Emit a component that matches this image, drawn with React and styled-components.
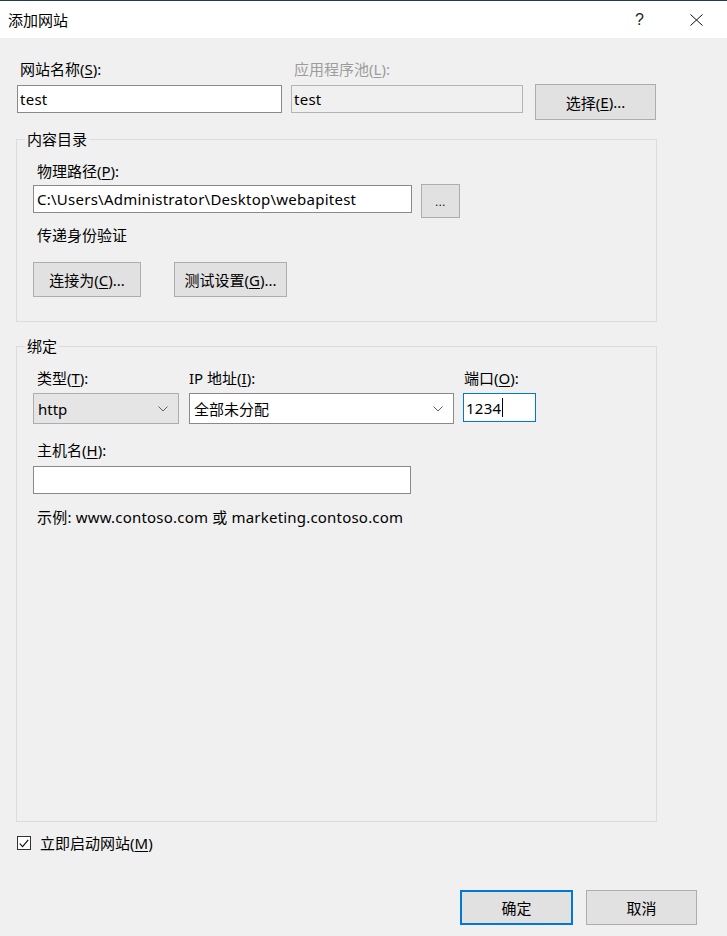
import React from "react";
import styled, { createGlobalStyle } from "styled-components";

const GlobalStyle = createGlobalStyle`
  html, body {
    margin: 0;
    padding: 0;
    background: #f0f0f0;
  }
  body {
    font-family: "Noto Sans", "Noto Sans CJK SC", sans-serif;
    font-size: 15px;
    color: #000;
  }
`;

const Dialog = styled.div`
  width: 727px;
  height: 936px;
  display: flex;
  flex-direction: column;
  background: #f0f0f0;
  overflow: hidden;
`;

const TitleBar = styled.div`
  height: 37px;
  border-top: 1px solid #1e3d52;
  background: #fff;
  display: flex;
  align-items: center;
  padding: 0 2px 0 8px;
  flex-shrink: 0;
`;

const Title = styled.div`
  flex: 1;
  font-size: 15px;
  line-height: 18px;
`;

const TitleButton = styled.div`
  width: 57px;
  height: 37px;
  display: flex;
  align-items: center;
  justify-content: center;
  font-family: "Liberation Sans", sans-serif;
  font-size: 16px;
  color: #222;
`;

const Body = styled.div`
  flex: 1;
  display: flex;
  flex-direction: column;
  padding: 0 16px 0 16px;
`;

const TopRow = styled.div`
  display: flex;
  margin-top: 22px;
  padding-left: 1px;
`;

const Field = styled.div`
  display: flex;
  flex-direction: column;
  width: ${(p) => p.width}px;
  margin-right: ${(p) => p.gap || 0}px;
`;

const Label = styled.div`
  line-height: 18px;
  height: 18px;
  padding-left: ${(p) => (p.indent === undefined ? 4 : p.indent)}px;
  margin-top: ${(p) => p.above || 0}px;
  margin-bottom: ${(p) => p.below || 0}px;
  color: ${(p) => (p.disabled ? "#9c9c9c" : "#000")};
  white-space: nowrap;
`;

const Key = styled.u`
  text-underline-offset: 2px;
`;

const TextBox = styled.div`
  box-sizing: border-box;
  width: ${(p) => (p.width ? `${p.width}px` : "100%")};
  height: ${(p) => p.height || 28}px;
  border: 1px solid ${(p) => (p.focused ? "#0078d7" : p.disabled ? "#b4b4b4" : "#8a8a8a")};
  background: ${(p) => (p.disabled ? "#f0f0f0" : "#fff")};
  padding: 0 ${(p) => p.pad || 3}px;
  display: flex;
  align-items: center;
  white-space: nowrap;
  overflow: hidden;
  letter-spacing: 0.25px;
`;

const Caret = styled.span`
  display: inline-block;
  width: 1px;
  height: 19px;
  background: #000;
  margin-left: 1px;
`;

const Button = styled.div`
  box-sizing: border-box;
  width: ${(p) => p.width}px;
  height: ${(p) => p.height || 35}px;
  background: #e1e1e1;
  border: ${(p) => (p.primary ? "2px solid #0078d7" : "1px solid #adadad")};
  display: flex;
  align-items: center;
  justify-content: center;
  flex-shrink: 0;
  white-space: nowrap;
`;

const ButtonSlot = styled.div`
  padding-top: 24px;
  margin-left: 3px;
`;

const Group = styled.fieldset`
  margin: ${(p) => p.top || 0}px 0 0 0;
  padding: 0;
  width: 641px;
  box-sizing: border-box;
  border: 1px solid #dcdcdc;
  min-width: 0;
  display: flex;
  flex-direction: column;
  ${(p) => (p.grow ? "flex: 1;" : "")}
`;

const Legend = styled.legend`
  margin-left: 8px;
  padding: 0 2px;
  line-height: 18px;
`;

const GroupInner = styled.div`
  padding: ${(p) => p.pt}px 16px ${(p) => p.pb}px 16px;
  display: flex;
  flex-direction: column;
`;

const Row = styled.div`
  display: flex;
  align-items: flex-start;
  gap: ${(p) => p.gap || 0}px;
  margin-top: ${(p) => p.top || 0}px;
`;

const BrowseButton = styled(Button)`
  margin-top: -1px;
  font-size: 11px;
  letter-spacing: 0.5px;
`;

const Select = styled.div`
  box-sizing: border-box;
  width: ${(p) => p.width}px;
  height: 31px;
  border: 1px solid ${(p) => (p.flat ? "#adadad" : "#8a8a8a")};
  background: ${(p) => (p.flat ? "#e5e5e5" : "#fff")};
  display: flex;
  align-items: center;
  padding: 0 10px 0 4px;
  justify-content: space-between;
`;

const Hint = styled.div`
  line-height: 18px;
  padding-left: 4px;
  margin-top: 14px;
  white-space: nowrap;
  letter-spacing: 0.2px;
`;

const CheckRow = styled.div`
  display: flex;
  align-items: center;
  margin-top: 12px;
  padding-left: 1px;
  line-height: 18px;
`;

const CheckBox = styled.div`
  box-sizing: border-box;
  width: 14px;
  height: 14px;
  border: 1px solid #333;
  background: #fff;
  display: flex;
  align-items: center;
  justify-content: center;
  margin-right: 9px;
`;

const Footer = styled.div`
  display: flex;
  justify-content: flex-end;
  gap: 13px;
  margin-top: 38px;
  padding: 0 14px 11px 0;
`;

const Chevron = () => (
  <svg width="10" height="6" viewBox="0 0 10 6">
    <path d="M0.5 0.5 L5 5 L9.5 0.5" fill="none" stroke="#606060" strokeWidth="1" />
  </svg>
);

const CloseIcon = () => (
  <svg width="13" height="12" viewBox="0 0 13 12">
    <path d="M0.5 0.5 L12.5 11.5 M12.5 0.5 L0.5 11.5" stroke="#111" strokeWidth="1" />
  </svg>
);

const CheckMark = () => (
  <svg width="10" height="9" viewBox="0 0 10 9">
    <path d="M0.8 4.6 L3.6 7.6 L9.2 0.8" fill="none" stroke="#111" strokeWidth="1.2" />
  </svg>
);

const App = () => {
  return (
    <>
      <GlobalStyle />
      <Dialog>
        <TitleBar>
          <Title>添加网站</Title>
          <TitleButton>?</TitleButton>
          <TitleButton>
            <CloseIcon />
          </TitleButton>
        </TitleBar>
        <Body>
          <TopRow>
            <Field width={265} gap={9}>
              <Label indent={3} below={7}>
                网站名称(<Key>S</Key>):
              </Label>
              <TextBox pad={2}>test</TextBox>
            </Field>
            <Field width={232} gap={9}>
              <Label indent={3} below={7} disabled>
                应用程序池(<Key>L</Key>):
              </Label>
              <TextBox pad={2} disabled>
                test
              </TextBox>
            </Field>
            <ButtonSlot>
              <Button width={121} height={36}>
                选择(<Key>E</Key>)...
              </Button>
            </ButtonSlot>
          </TopRow>

          <Group top={10}>
            <Legend>内容目录</Legend>
            <GroupInner pt={14} pb={24}>
              <Label below={5}>
                物理路径(<Key>P</Key>):
              </Label>
              <Row gap={9}>
                <TextBox width={379}>C:\Users\Administrator\Desktop\webapitest</TextBox>
                <BrowseButton width={39} height={34}>
                  ...
                </BrowseButton>
              </Row>
              <Label above={8}>传递身份验证</Label>
              <Row gap={33} top={18}>
                <Button width={108}>
                  连接为(<Key>C</Key>)...
                </Button>
                <Button width={113}>
                  测试设置(<Key>G</Key>)...
                </Button>
              </Row>
            </GroupInner>
          </Group>

          <Group top={15} grow>
            <Legend>绑定</Legend>
            <GroupInner pt={14} pb={0}>
              <Row>
                <Field width={146} gap={10}>
                  <Label below={6}>
                    类型(<Key>T</Key>):
                  </Label>
                  <Select width={146} flat>
                    http
                    <Chevron />
                  </Select>
                </Field>
                <Field width={265} gap={9}>
                  <Label indent={0} below={6}>
                    IP 地址(<Key>I</Key>):
                  </Label>
                  <Select width={265}>
                    全部未分配
                    <Chevron />
                  </Select>
                </Field>
                <Field width={73}>
                  <Label indent={1} below={6}>
                    端口(<Key>O</Key>):
                  </Label>
                  <TextBox focused height={29} pad={2}>
                    1234
                    <Caret />
                  </TextBox>
                </Field>
              </Row>
              <Label above={17} below={7}>
                主机名(<Key>H</Key>):
              </Label>
              <TextBox width={378} />
              <Hint>示例: www.contoso.com 或 marketing.contoso.com</Hint>
            </GroupInner>
          </Group>

          <CheckRow>
            <CheckBox>
              <CheckMark />
            </CheckBox>
            立即启动网站(<Key>M</Key>)
          </CheckRow>

          <Footer>
            <Button width={113} primary>
              确定
            </Button>
            <Button width={111}>取消</Button>
          </Footer>
        </Body>
      </Dialog>
    </>
  );
};

export default App;
